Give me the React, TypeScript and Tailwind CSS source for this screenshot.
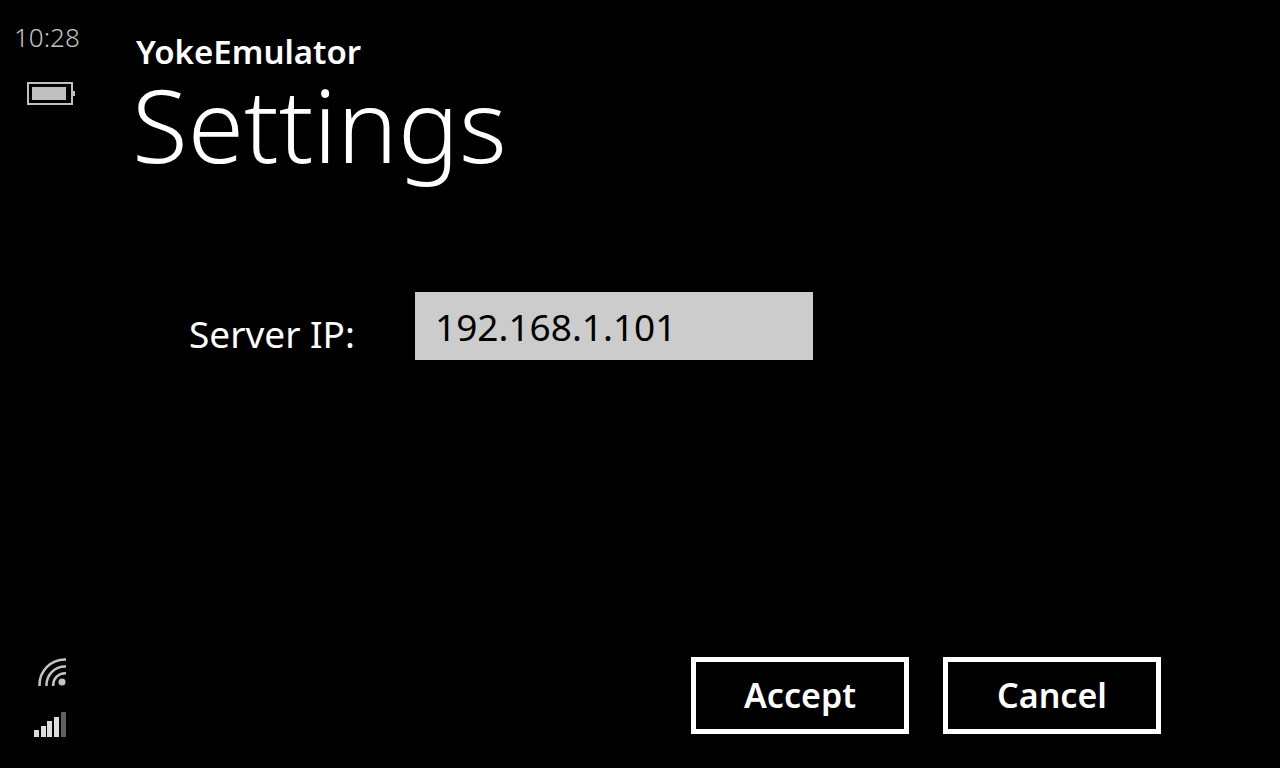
import React from "react";

function Battery() {
  return (
    <svg width="50" height="24" viewBox="0 0 50 24" aria-label="Battery" role="img">
      <rect x="2" y="2" width="44" height="21" fill="none" stroke="#c0c0c0" strokeWidth="2" />
      <rect x="6" y="6" width="34" height="13" fill="#c0c0c0" />
      <rect x="46" y="10" width="3" height="5" fill="#c0c0c0" />
    </svg>
  );
}

function Wifi() {
  return (
    <svg width="28" height="28" viewBox="0 0 28 28" aria-label="Wi-Fi" role="img" fill="none" stroke="#c4c4c4" strokeWidth="2.5">
      <circle cx="24" cy="24" r="3.5" fill="#c4c4c4" stroke="none" />
      <path d="M1.500 28V27A25.500 25.500 0 0 1 27 1.500H28" />
      <path d="M8.500 28V27A18.500 18.500 0 0 1 27 8.500H28" />
      <path d="M15.200 28V27A11.800 11.800 0 0 1 27 15.200H28" />
    </svg>
  );
}

function Signal() {
  return (
    <svg width="34" height="26" viewBox="0 0 34 26" aria-label="Signal" role="img" fill="#dcdcdc">
      <rect x="1" y="18" width="5" height="7" />
      <rect x="8" y="14" width="5" height="11" />
      <rect x="14" y="9" width="5" height="16" />
      <rect x="21" y="5" width="5" height="20" />
      <rect x="28" y="0" width="5" height="25" fill="#606060" />
    </svg>
  );
}

export default function App() {
  return (
    <div className="flex min-h-screen bg-black font-['Noto_Sans',sans-serif] text-white">
      <aside className="flex w-[102px] shrink-0 flex-col justify-between pt-[17px] pb-[30px]">
        <div className="flex flex-col items-center gap-6">
          <time className="w-full pl-[14px] text-[26px] leading-10 font-light text-[#c4c4c4]">10:28</time>
          <Battery />
        </div>
        <div className="flex flex-col items-center gap-[26px] pr-0.5">
          <div className="flex pl-1">
            <Wifi />
          </div>
          <Signal />
        </div>
      </aside>
      <main className="flex grow flex-col pt-8 pr-[119px] pb-[34px] pl-8">
        <header className="pl-0.5">
          <p className="text-[33px] leading-10 font-semibold">YokeEmulator</p>
          <h1 className="-ml-1 text-[102px] leading-[104px] font-light">Settings</h1>
        </header>
        <form className="flex grow flex-col justify-between pt-[116px]">
          <div className="flex items-center pl-[55px]">
            <label htmlFor="ip" className="w-[226px] pt-4 text-[37px] leading-10">Server IP:</label>
            <input id="ip" defaultValue="192.168.1.101" className="h-[68px] w-[398px] bg-[#ccc] px-5 text-[37px] text-black" />
          </div>
          <div className="flex justify-end gap-[34px]">
            <button type="button" className="h-[77px] w-[218px] border-5 border-white text-[34px] font-semibold">Accept</button>
            <button type="button" className="h-[77px] w-[218px] border-5 border-white text-[34px] font-semibold">Cancel</button>
          </div>
        </form>
      </main>
    </div>
  );
}
